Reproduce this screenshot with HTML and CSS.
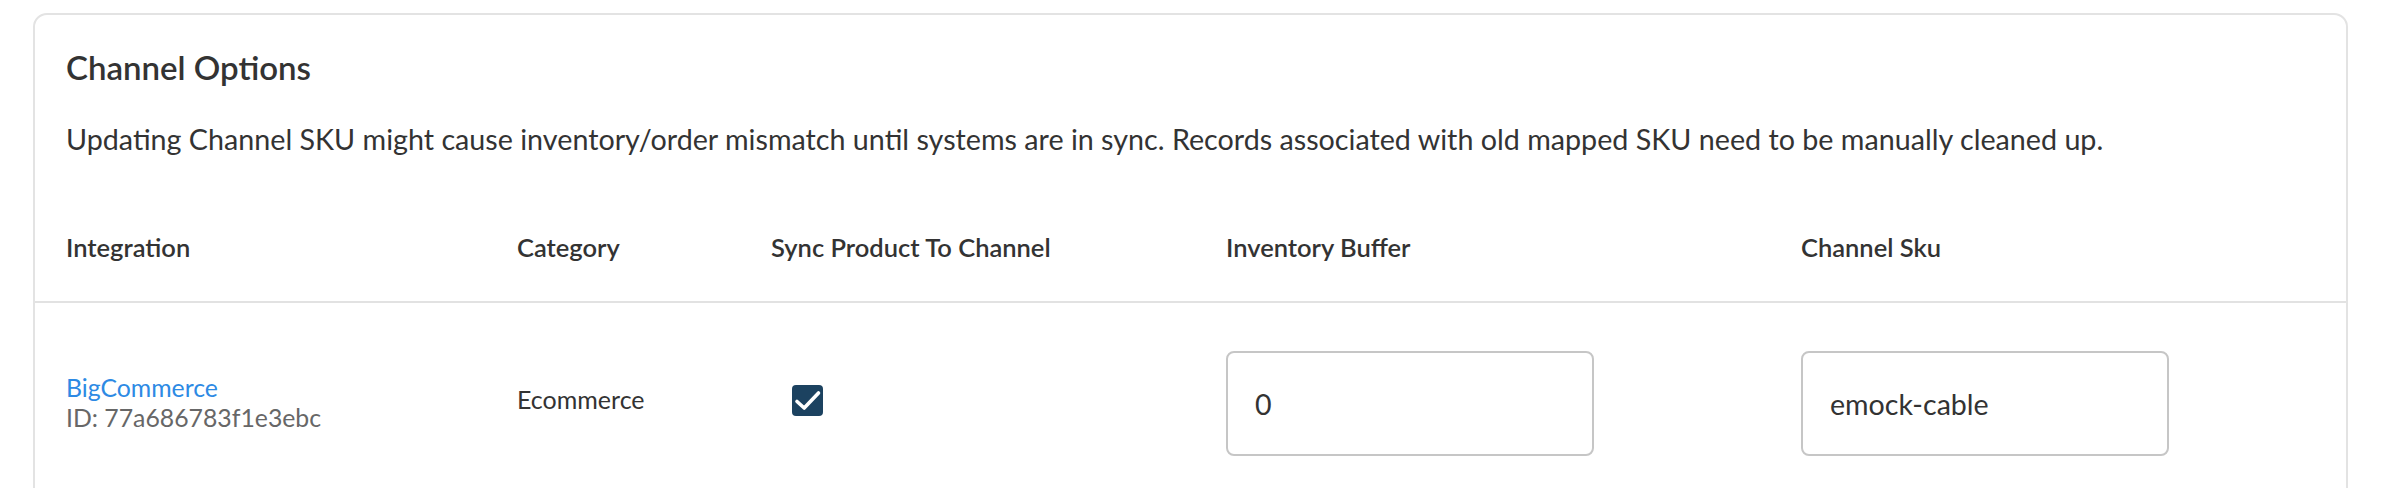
FILE: index.html
```html
<!DOCTYPE html>
<html lang="en">
<head>
<meta charset="utf-8">
<title>Channel Options</title>
<link rel="stylesheet" href="styles.css">
</head>
<body>
<div class="page">
  <section class="card">
    <header class="card-head">
      <h2 class="card-title">Channel Options</h2>
      <p class="card-note">Updating Channel SKU might cause inventory/order mismatch until systems are in sync. Records associated with old mapped SKU need to be manually cleaned up.</p>
    </header>
    <div class="grid grid-head">
      <div class="th">Integration</div>
      <div class="th">Category</div>
      <div class="th">Sync Product To Channel</div>
      <div class="th">Inventory Buffer</div>
      <div class="th">Channel Sku</div>
    </div>
    <div class="grid grid-row">
      <div class="td integ">
        <a class="integ-link" href="#">BigCommerce</a>
        <span class="integ-id">ID: 77a686783f1e3ebc</span>
      </div>
      <div class="td cat">Ecommerce</div>
      <div class="td sync">
        <span class="checkbox" role="checkbox" aria-checked="true">
          <svg viewBox="0 0 31 31" width="31" height="31"><polyline points="5,16.5 12.2,23 26.5,8" fill="none" stroke="#fff" stroke-width="3.6" stroke-linecap="round" stroke-linejoin="round"/></svg>
        </span>
      </div>
      <div class="td"><input class="field" type="text" value="0"></div>
      <div class="td"><input class="field" type="text" value="emock-cable"></div>
    </div>
  </section>
</div>
</body>
</html>
```

FILE: styles.css
```css
html, body {
  margin: 0;
  padding: 0;
  background: #ffffff;
}

body {
  font-family: "Lato", "Noto Sans", sans-serif;
  color: #333333;
}

.page {
  padding: 13px 34px 0 33px;
}

.card {
  border: 2px solid #e3e3e3;
  border-radius: 14px;
  background: #fff;
  min-height: 520px;
}

.card-head {
  padding: 28px 31px 0 31px;
}

.card-title {
  margin: 0;
  font-size: 33px;
  line-height: 48px;
  font-weight: 600;
  color: #333333;
}

.card-note {
  margin: 30px 0 0 0;
  font-size: 28.7px;
  line-height: 36px;
  color: #333333;
}

.grid {
  display: grid;
  grid-template-columns: 451px 254px 455px 575px 1fr;
  padding-left: 31px;
}

.grid-head {
  padding-top: 72px;
  padding-bottom: 36px;
  border-bottom: 2px solid #e2e2e2;
}

.th {
  font-size: 25.5px;
  line-height: 36px;
  font-weight: 600;
  color: #333333;
}

.grid-row {
  padding-top: 48px;
  padding-bottom: 48px;
  align-items: center;
}

.td {
  font-size: 25px;
}

.integ {
  display: flex;
  flex-direction: column;
  line-height: 30.5px;
  font-size: 24.8px;
  margin-top: -1px;
}

.integ-link {
  color: #2d8ae4;
  text-decoration: none;
}

.integ-id {
  color: #676767;
}

.cat {
  line-height: 34px;
  margin-top: -9px;
  color: #333333;
}

.sync {
  margin-top: -7px;
}

.checkbox {
  display: block;
  width: 31px;
  height: 31px;
  margin-left: 21px;
  background: #1c4260;
  border-radius: 4px;
}

.checkbox svg {
  display: block;
}

.field {
  box-sizing: border-box;
  width: 368px;
  height: 105px;
  border: 2px solid #c6c6c6;
  border-radius: 8px;
  padding: 0 0 0 27px;
  font-family: "Lato", "Noto Sans", sans-serif;
  font-size: 28.6px;
  color: #333333;
  background: #fff;
  outline: none;
}
```
